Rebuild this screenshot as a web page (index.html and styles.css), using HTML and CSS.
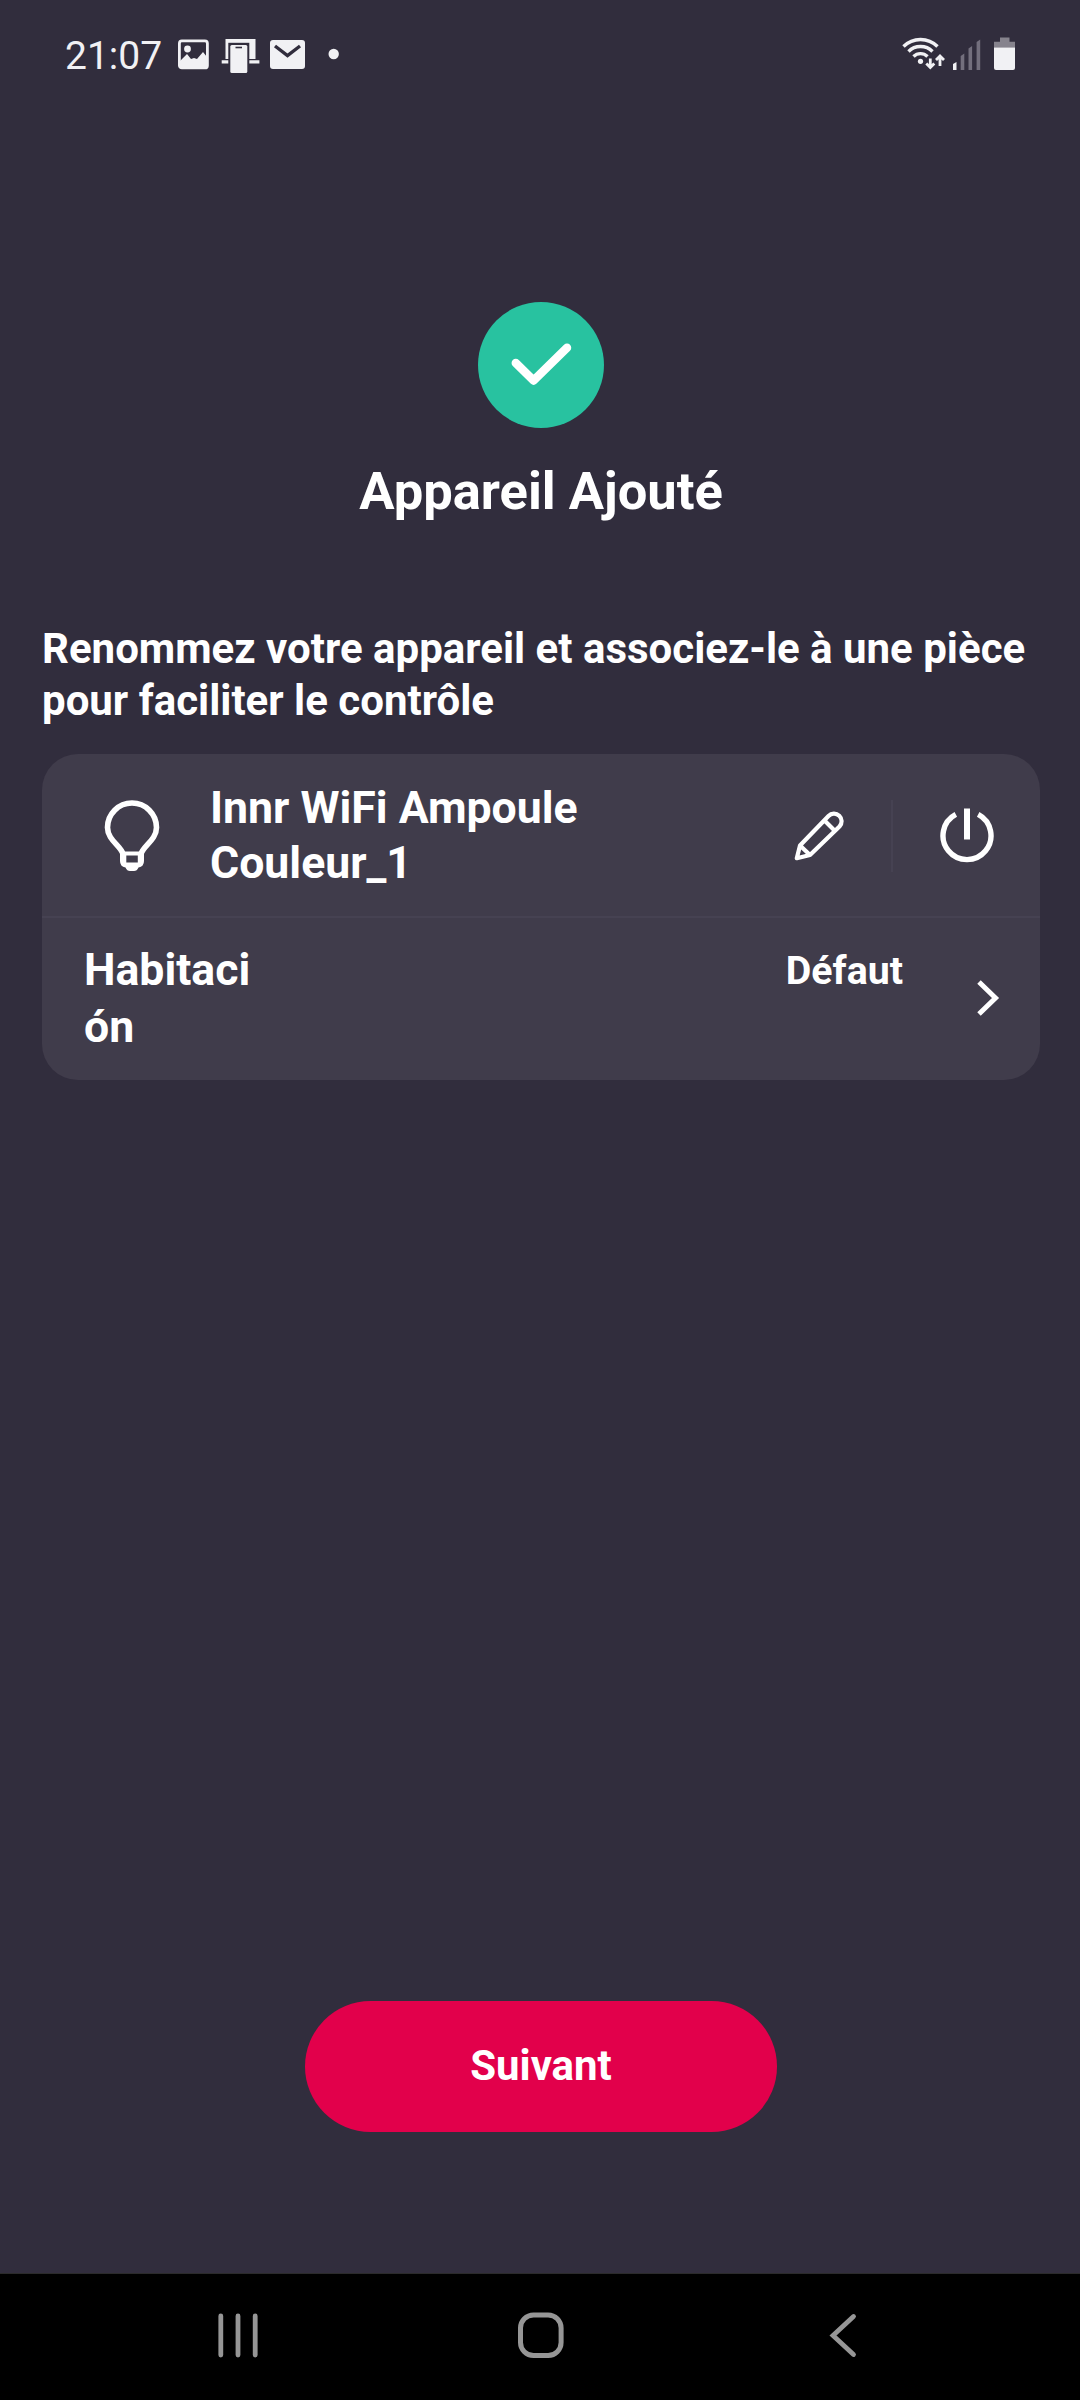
FILE: index.html
```html
<!DOCTYPE html>
<html lang="fr">
<head>
<meta charset="utf-8">
<title>Appareil Ajouté</title>
<link rel="stylesheet" href="styles.css">
</head>
<body>
<header class="status">
  <span class="time">21:07</span>
  <svg class="notif" width="165" height="40" viewBox="0 0 165 40">
    <rect x="1.4" y="5.900" width="28" height="27" rx="2.5" fill="none" stroke="#f1f1f4" stroke-width="2.8"/>
    <circle cx="9.5" cy="14" r="3.4" fill="#f1f1f4"/>
    <path d="M2 26l7-7 4 5 3-1 3 1 6-7 4 5v11H2z" fill="#f1f1f4"/>
    <path d="M47.500 4h30v20h-30zM43.700 25.300h37.700v3.200H43.700z" fill="#f1f1f4"/>
    <rect x="50.300" y="7.800" width="21" height="30" fill="#312d3d"/>
    <rect x="52.300" y="10" width="17" height="28" rx="1.500" fill="#f1f1f4"/>
    <path d="M57.500 12.500h6.500" stroke="#312d3d" stroke-width="1.600"/>
    <rect x="92" y="5" width="35" height="29" rx="3" fill="#f1f1f4"/>
    <path d="M97 11l12.500 9.500L122 11" fill="none" stroke="#312d3d" stroke-width="3.400"/>
    <circle cx="155.700" cy="19" r="5.200" fill="#f1f1f4"/>
  </svg>
  <svg class="signals" width="116" height="40" viewBox="0 0 116 40">
    <g fill="none" stroke="#f1f1f4" stroke-width="3.400">
      <path d="M3.500 11.500a24 24 0 0 1 34 0M8.500 16.500a17 17 0 0 1 24 0M13.500 21.500a10 10 0 0 1 14 0"/>
      <path d="M30.300 23.500v8M26.300 28.500l4 4 4-4M40 31v-8M36 25l4-4 4 4" stroke-width="2.800"/>
    </g>
    <circle cx="20.500" cy="26.300" r="2.600" fill="#f1f1f4"/>
    <path d="M53 29l3.500-2v8H53z" fill="#f1f1f4"/>
    <path d="M60.700 21l3.600-2.400V35h-3.600zM68.500 13.500l3.600-2.500v24h-3.600zM76.600 7l3.600-2.600V35h-3.600z" fill="#736f7d"/>
    <path d="M100 2.500h9.500v4.200h5.500v6H94v-6h6z" fill="#86838d"/>
    <path d="M94 12.500h21V33a2 2 0 0 1-2 2H96a2 2 0 0 1-2-2z" fill="#f1f1f4"/>
  </svg>
</header>

<main class="page">
  <svg class="success" width="126" height="126" viewBox="0 0 126 126">
    <circle cx="63" cy="63" r="63" fill="#28c2a0"/>
    <path d="M37.800 61L55.600 78.500 89 45.700" fill="none" stroke="#fff" stroke-width="8.500" stroke-linecap="round" stroke-linejoin="round"/>
  </svg>
  <h1 class="title">Appareil Ajouté</h1>
  <p class="hint">Renommez votre appareil et associez-le à une pièce pour faciliter le contrôle</p>

  <section class="card">
    <div class="row device">
      <svg class="bulb" width="56" height="72" viewBox="0 0 56 72">
        <path d="M19 54C17 46 3.500 40 3.500 27.500a24.500 24.500 0 0 1 49 0C52.500 40 39 46 37 54" fill="none" stroke="#fff" stroke-width="5.600"/>
        <path fill-rule="evenodd" d="M16 51.500h24V61q0 5.500-5.500 6.500-1.500 3.500-4.500 3.500h-4q-3 0-4.500-3.500Q16 66.500 16 61zM22.300 55.500v7h11.500v-7z" fill="#fff"/>
      </svg>
      <span class="name">Innr WiFi Ampoule Couleur_1</span>
      <svg class="pencil" width="50" height="50" viewBox="0 0 50 50">
        <path d="M2.800 47.200L6 34.500 34.500 5a7.600 7.600 0 0 1 11 10.500L16 44zM6 34.500L16 44M30.500 9.500l10 10" fill="none" stroke="#fff" stroke-width="4.200" stroke-linejoin="round"/>
      </svg>
      <span class="separator"></span>
      <svg class="power" width="56" height="56" viewBox="0 0 56 56">
        <path d="M16.800 6.400a24 24 0 1 0 22.400 0" fill="none" stroke="#fff" stroke-width="5.400"/>
        <path d="M28 .5v31" stroke="#fff" stroke-width="6"/>
      </svg>
    </div>
    <div class="row room">
      <span class="label">Habitaci<br>ón</span>
      <span class="value">Défaut</span>
      <svg class="chevron" width="26" height="40" viewBox="0 0 26 40">
        <path d="M4 3L20.500 19 4 35" fill="none" stroke="#fff" stroke-width="5"/>
      </svg>
    </div>
  </section>

  <button class="next">Suivant</button>
</main>

<nav class="navbar">
  <svg width="48" height="50" viewBox="0 0 48 50"><path d="M6.800 5v39M24 5v39M41.200 5v39" stroke="#969696" stroke-width="4.800" stroke-linecap="round"/></svg>
  <svg width="48" height="50" viewBox="0 0 48 50"><rect x="3.500" y="4" width="40.600" height="40.600" rx="13" fill="none" stroke="#969696" stroke-width="5"/></svg>
  <svg width="48" height="50" viewBox="0 0 48 50"><path d="M34.500 5.500L14 24.500l20.500 19" fill="none" stroke="#969696" stroke-width="4.800" stroke-linecap="round"/></svg>
</nav>
</body>
</html>
```
FILE: styles.css
```css
* { box-sizing: border-box; }
body {
  margin: 0;
  width: 1080px;
  height: 2400px;
  display: flex;
  flex-direction: column;
  background: #312d3d;
  color: #fff;
  font-family: Roboto, sans-serif;
}
svg { display: block; flex: none; }

.status {
  height: 110px;
  display: flex;
  align-items: flex-start;
  padding: 35px 64px 0 65px;
}
.time {
  width: 113px;
  font-size: 39px;
  line-height: 42px;
  color: #f1f1f4;
}
.signals { margin-left: auto; }

.page {
  flex: 1;
  display: flex;
  flex-direction: column;
  align-items: center;
  padding: 192px 40px 141px 42px;
}
.title {
  margin: 33px 0 0;
  font-size: 52.5px;
  line-height: 60px;
  font-weight: 700;
}
.hint {
  align-self: stretch;
  margin: 102px 0 0;
  font-size: 42px;
  line-height: 52px;
  font-weight: 700;
}
.card {
  align-self: stretch;
  margin-top: 27px;
  border-radius: 36px;
  background: #403c4b;
  font-weight: 700;
}
.row { display: flex; align-items: center; }
.device { height: 162px; padding: 2px 45px 0 62px; }
.name {
  width: 420px;
  margin-left: 50px;
  font-size: 44.6px;
  line-height: 55px;
}
.pencil { margin-left: auto; }
.separator {
  width: 2px;
  height: 72px;
  margin: 0 46px 0 47px;
  background: #464252;
}
.room {
  height: 164px;
  padding: 0 39px 0 42px;
  border-top: 2px solid #464252;
}
.label { font-size: 44.6px; line-height: 57px; }
.value {
  align-self: flex-start;
  margin: 25px 72px 0 auto;
  font-size: 39.3px;
  line-height: 57px;
}
.next {
  width: 472px;
  height: 131px;
  margin-top: auto;
  padding: 0 0 3px;
  border: 0;
  border-radius: 66px;
  background: #e2004b;
  color: #fff;
  font: 700 42px Roboto, sans-serif;
}

.navbar {
  height: 127px;
  display: flex;
  align-items: center;
  justify-content: space-between;
  padding: 0 213px 3px 214px;
  border-top: 1px solid #2b2b2b;
  background: #000;
}
```
